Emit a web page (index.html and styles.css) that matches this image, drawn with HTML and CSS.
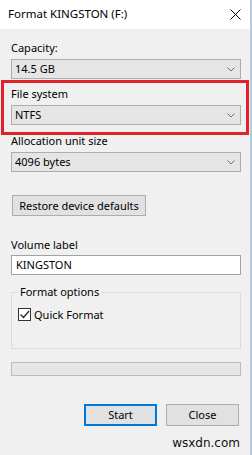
FILE: index.html
```html
<!DOCTYPE html>
<html>
<head>
<meta charset="utf-8">
<link rel="stylesheet" href="styles.css">
</head>
<body>
<div class="window">
  <div class="titlebar">
    <span class="title">Format KINGSTON (F:)</span>
    <svg class="close-x" width="11" height="11" viewBox="0 0 11 11"><path d="M0.5 0.5 L10.5 10.5 M10.5 0.5 L0.5 10.5" stroke="#000" stroke-width="1" fill="none"/></svg>
  </div>
  <div class="content">
    <div class="label first">Capacity:</div>
    <div class="combo"><span>14.5 GB</span><svg class="chev" width="8" height="5" viewBox="0 0 8 5"><path d="M0.5 0.5 L4 4 L7.5 0.5" stroke="#6d6d6d" fill="none"/></svg></div>

    <div class="highlight">
      <div class="label">File system</div>
      <div class="combo"><span>NTFS</span><svg class="chev" width="8" height="5" viewBox="0 0 8 5"><path d="M0.5 0.5 L4 4 L7.5 0.5" stroke="#6d6d6d" fill="none"/></svg></div>
    </div>

    <div class="label after-hl">Allocation unit size</div>
    <div class="combo"><span>4096 bytes</span><svg class="chev" width="8" height="5" viewBox="0 0 8 5"><path d="M0.5 0.5 L4 4 L7.5 0.5" stroke="#6d6d6d" fill="none"/></svg></div>

    <div class="restore-row"><button class="btn restore">Restore device defaults</button></div>

    <div class="label vol">Volume label</div>
    <div class="textbox">KINGSTON</div>

    <fieldset class="group">
      <legend>Format options</legend>
      <div class="check-row">
        <span class="checkbox"><svg width="11" height="11" viewBox="0 0 11 11"><path d="M1.5 5.5 L4.5 8.5 L10 2" stroke="#222" stroke-width="1.2" fill="none"/></svg></span>
        <span>Quick Format</span>
      </div>
    </fieldset>

    <div class="progress"></div>

    <div class="buttons">
      <button class="btn action primary">Start</button>
      <button class="btn action">Close</button>
    </div>

    <div class="watermark">wsxdn.com</div>
  </div>
</div>
</body>
</html>
```
FILE: styles.css
```css
html, body {
  margin: 0;
  padding: 0;
  background: #f0f0f0;
}
body {
  width: 252px;
  height: 455px;
  overflow: hidden;
  font-family: "Noto Sans", "Open Sans", sans-serif;
  font-size: 11px;
  color: #000;
}
.window {
  box-sizing: border-box;
  width: 252px;
  height: 455px;
  border-right: 2px solid #b7cbe0;
  background: #f0f0f0;
}
.titlebar {
  height: 29px;
  background: #fff;
  display: flex;
  align-items: center;
  justify-content: space-between;
  padding: 0 9px 0 8px;
}
.title {
  font-size: 11.5px;
  line-height: 14px;
  padding-bottom: 1px;
}
.close-x {
  display: block;
}
.content {
  padding: 12px 9px 0 11px;
}
.label {
  line-height: 14px;
  height: 14px;
  margin-bottom: 4px;
  white-space: nowrap;
}
.combo {
  box-sizing: border-box;
  height: 20px;
  border: 1px solid #adadad;
  background: #e5e5e5;
  display: flex;
  align-items: center;
  justify-content: space-between;
  padding: 0 5px 0 3px;
  line-height: 16px;
}
.chev {
  display: block;
}
.highlight {
  margin: 1px -8px 0 -10px;
  border: 3px solid #e0232b;
  padding: 4px 5px 7px 7px;
}
.label.after-hl {
  margin-top: -1px;
}
.restore-row {
  margin-top: 23px;
  padding-left: 1px;
}
.btn {
  box-sizing: border-box;
  font-family: inherit;
  font-size: 11px;
  color: #000;
  background: #e1e1e1;
  border: 1px solid #adadad;
  margin: 0;
  padding: 0;
  line-height: 16px;
}
.restore {
  width: 134px;
  height: 21px;
}
.label.vol {
  margin-top: 22px;
  margin-bottom: 3px;
}
.textbox {
  box-sizing: border-box;
  height: 20px;
  background: #fff;
  border: 1px solid #a2a2a2;
  padding: 0 4px;
  line-height: 17px;
}
.group {
  margin: 10px 0 0 0;
  padding: 0 6px 27px 6px;
  border: 1px solid #dcdcdc;
  min-width: 0;
}
.group legend {
  padding: 0 2px;
  line-height: 14px;
  font-size: 11px;
}
.check-row {
  display: flex;
  align-items: center;
  gap: 3px;
  height: 13px;
  margin-top: 9px;
}
.checkbox {
  box-sizing: border-box;
  width: 13px;
  height: 13px;
  border: 1px solid #333;
  background: #fff;
  display: flex;
  align-items: center;
  justify-content: center;
}
.checkbox svg {
  display: block;
}
.progress {
  box-sizing: border-box;
  margin-top: 13px;
  height: 14px;
  border: 1px solid #bcbcbc;
  background: #e6e6e6;
}
.buttons {
  margin-top: 28px;
  display: flex;
  justify-content: flex-end;
  gap: 9px;
  padding-right: 2px;
}
.action {
  width: 73px;
  height: 22px;
}
.primary {
  border: 2px solid #0078d7;
}
.watermark {
  margin-top: 10px;
  text-align: right;
  font-family: "DejaVu Sans", sans-serif;
  font-size: 12px;
  line-height: 14px;
  color: #111;
  padding-right: 1px;
}
```
